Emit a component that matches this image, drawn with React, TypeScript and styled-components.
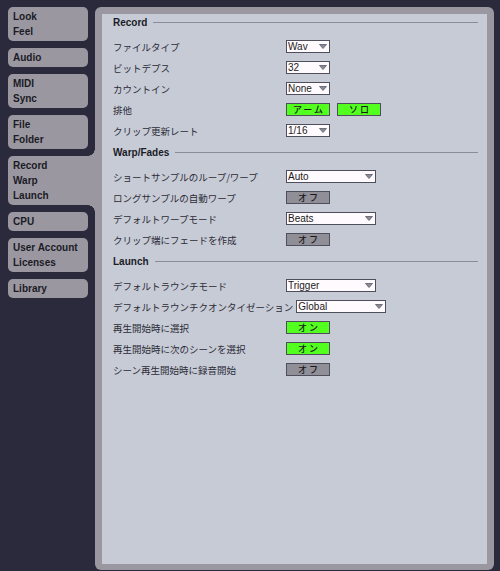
import React from 'react';
import styled, { createGlobalStyle, css } from 'styled-components';

const DARK = '#2a2a3c';
const FRAME = '#9a97a0';
const PANEL = '#c7cbd6';

const GlobalStyle = createGlobalStyle`
  html, body {
    margin: 0;
    padding: 0;
    background: ${DARK};
  }
  body {
    font-family: "Liberation Sans", Arial, "Noto Sans CJK JP", sans-serif;
    color: #20202a;
  }
`;

const Screen = styled.div`
  display: flex;
  align-items: flex-start;
  height: 571px;
  padding: 7px 6px 0 8px;
  box-sizing: border-box;
  overflow: hidden;
`;

const Sidebar = styled.div`
  display: flex;
  flex-direction: column;
  gap: 7px;
  width: 87px;
  flex-shrink: 0;
`;

const Tab = styled.div<{ $active?: boolean }>`
  position: relative;
  width: 80px;
  box-sizing: border-box;
  padding: 2px 0 2px 5px;
  background: ${FRAME};
  border-radius: 5px;
  font-size: 10px;
  font-weight: bold;
  line-height: 15px;
  color: #1b1b26;

  ${({ $active }) =>
    $active &&
    css`
      width: 87px;
      border-radius: 5px 0 0 5px;

      &::before,
      &::after {
        content: '';
        position: absolute;
        right: 0;
        width: 7px;
        height: 7px;
      }
      &::before {
        top: -7px;
        background: radial-gradient(circle at 0 0, transparent 6.5px, ${FRAME} 7px);
      }
      &::after {
        bottom: -7px;
        background: radial-gradient(circle at 0 100%, transparent 6.5px, ${FRAME} 7px);
      }
    `}
`;

const Frame = styled.div`
  flex: 1;
  height: 563px;
  box-sizing: border-box;
  padding: 7px 7px 6px 7px;
  background: ${FRAME};
  border-radius: 6px;
`;

const Panel = styled.div`
  height: 100%;
  box-sizing: border-box;
  padding: 0 9px 0 11px;
  background: ${PANEL};
`;

const Section = styled.div`
  & + & {
    margin-top: 3px;
  }
`;

const Header = styled.div`
  display: flex;
  align-items: center;
  gap: 6px;
  height: 16px;
  margin-bottom: 6px;
  font-size: 10px;
  font-weight: bold;
  color: #1b1b26;

  &::after {
    content: '';
    flex: 1;
    height: 1px;
    background: #8c8c99;
  }
`;

const Row = styled.div`
  display: flex;
  align-items: center;
  height: 21px;
`;

const Label = styled.span`
  flex-shrink: 0;
  min-width: 170px;
  margin-right: 3px;
  font-family: "Noto Sans CJK JP", sans-serif;
  font-size: 9.5px;
  color: #2c2c36;
  white-space: nowrap;
`;

const Controls = styled.div`
  display: flex;
  gap: 7px;
`;

const Select = styled.div<{ $wide?: boolean }>`
  display: flex;
  align-items: center;
  justify-content: space-between;
  width: ${({ $wide }) => ($wide ? 90 : 44)}px;
  height: 13px;
  box-sizing: border-box;
  padding: 0 2px 0 1px;
  border: 1px solid #4e4e5c;
  background: #fffafd;
  font-size: 10px;
  line-height: 11px;
  color: #1c1c24;
`;

const Toggle = styled.div<{ $on?: boolean }>`
  display: flex;
  align-items: center;
  justify-content: center;
  width: 44px;
  height: 13px;
  box-sizing: border-box;
  padding-left: 2px;
  border: 1px solid #4e4e5c;
  background: ${({ $on }) => ($on ? '#52ff1f' : '#908e96')};
  font-family: "Noto Sans CJK JP", sans-serif;
  font-size: 9px;
  font-weight: 500;
  letter-spacing: 2px;
  color: #1a1a1a;
`;

const Arrow = () => (
  <svg width="8" height="5" viewBox="0 0 8 5">
    <polygon points="0.5,0.5 7.5,0.5 4,4.5" fill="#8a8a98" stroke="#5a5a68" strokeWidth="0.8" />
  </svg>
);

type Control =
  | { kind: 'select'; value: string; wide?: boolean }
  | { kind: 'toggle'; value: string; on?: boolean };

interface Setting {
  label: string;
  controls: Control[];
}

const sections: { title: string; rows: Setting[] }[] = [
  {
    title: 'Record',
    rows: [
      { label: 'ファイルタイプ', controls: [{ kind: 'select', value: 'Wav' }] },
      { label: 'ビットデプス', controls: [{ kind: 'select', value: '32' }] },
      { label: 'カウントイン', controls: [{ kind: 'select', value: 'None' }] },
      {
        label: '排他',
        controls: [
          { kind: 'toggle', value: 'アーム', on: true },
          { kind: 'toggle', value: 'ソロ', on: true },
        ],
      },
      { label: 'クリップ更新レート', controls: [{ kind: 'select', value: '1/16' }] },
    ],
  },
  {
    title: 'Warp/Fades',
    rows: [
      { label: 'ショートサンプルのループ/ワープ', controls: [{ kind: 'select', value: 'Auto', wide: true }] },
      { label: 'ロングサンプルの自動ワープ', controls: [{ kind: 'toggle', value: 'オフ' }] },
      { label: 'デフォルトワープモード', controls: [{ kind: 'select', value: 'Beats', wide: true }] },
      { label: 'クリップ端にフェードを作成', controls: [{ kind: 'toggle', value: 'オフ' }] },
    ],
  },
  {
    title: 'Launch',
    rows: [
      { label: 'デフォルトラウンチモード', controls: [{ kind: 'select', value: 'Trigger', wide: true }] },
      { label: 'デフォルトラウンチクオンタイゼーション', controls: [{ kind: 'select', value: 'Global', wide: true }] },
      { label: '再生開始時に選択', controls: [{ kind: 'toggle', value: 'オン', on: true }] },
      { label: '再生開始時に次のシーンを選択', controls: [{ kind: 'toggle', value: 'オン', on: true }] },
      { label: 'シーン再生開始時に録音開始', controls: [{ kind: 'toggle', value: 'オフ' }] },
    ],
  },
];

const tabs = [
  ['Look', 'Feel'],
  ['Audio'],
  ['MIDI', 'Sync'],
  ['File', 'Folder'],
  ['Record', 'Warp', 'Launch'],
  ['CPU'],
  ['User Account', 'Licenses'],
  ['Library'],
];

const ACTIVE_TAB = 4;

const App: React.FC = () => {
  return (
    <>
      <GlobalStyle />
      <Screen>
        <Sidebar>
          {tabs.map((lines, i) => (
            <Tab key={i} $active={i === ACTIVE_TAB}>
              {lines.map((l) => (
                <div key={l}>{l}</div>
              ))}
            </Tab>
          ))}
        </Sidebar>
        <Frame>
          <Panel>
            {sections.map((s) => (
              <Section key={s.title}>
                <Header>{s.title}</Header>
                {s.rows.map((r) => (
                  <Row key={r.label}>
                    <Label>{r.label}</Label>
                    <Controls>
                      {r.controls.map((c, i) =>
                        c.kind === 'select' ? (
                          <Select key={i} $wide={c.wide}>
                            <span>{c.value}</span>
                            <Arrow />
                          </Select>
                        ) : (
                          <Toggle key={i} $on={c.on}>
                            {c.value}
                          </Toggle>
                        )
                      )}
                    </Controls>
                  </Row>
                ))}
              </Section>
            ))}
          </Panel>
        </Frame>
      </Screen>
    </>
  );
};

export default App;
